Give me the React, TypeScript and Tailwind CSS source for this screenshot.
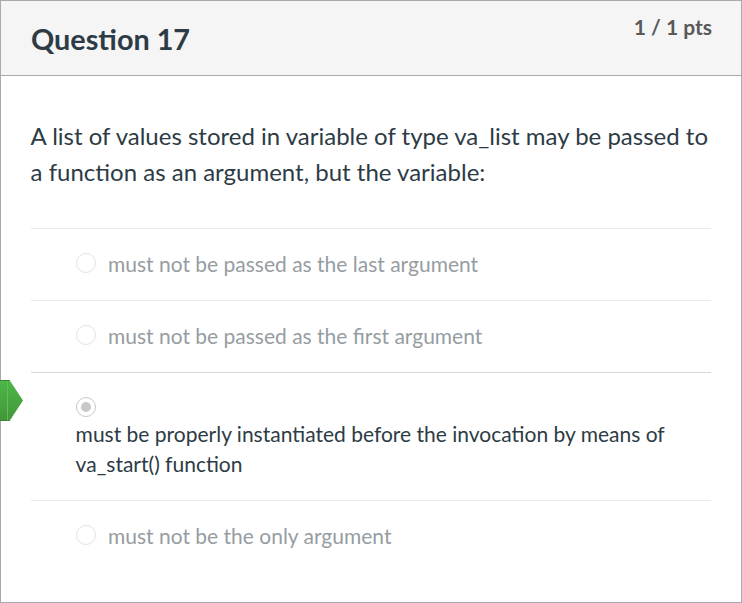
const options = [
  'must not be passed as the last argument',
  'must not be passed as the first argument',
];

function Radio({ checked = false }: { checked?: boolean }) {
  return (
    <span
      className={
        checked
          ? 'flex size-5 shrink-0 items-center justify-center rounded-full border border-[#c8c8c8] bg-white'
          : 'flex size-5 shrink-0 items-center justify-center rounded-full border border-[#e3e3e3] bg-white'
      }
    >
      {checked && <span className="size-2.5 rounded-full bg-[#c8c8c8]" />}
    </span>
  );
}

function MutedAnswer({ text }: { text: string }) {
  return (
    <div className="flex h-[72px] items-start border-t border-[#eaeaea] pt-6 pl-[45px]">
      <Radio />
      <span className="-mt-px ml-3 text-[21px] leading-6 text-[#969da2]">{text}</span>
    </div>
  );
}

export default function App() {
  return (
    <div className="relative h-[603px] w-[742px] overflow-hidden font-['Lato',sans-serif] text-[#2d3b45]">
      <div className="h-full border border-[#aaaaaa] bg-white">
        <header className="flex h-[75px] items-start justify-between border-b border-[#aaaaaa] bg-[#f5f5f5] pr-[29px] pl-[30px]">
          <h2 className="pt-5 text-[28.8px] leading-9 font-bold">Question 17</h2>
          <span className="pt-[11px] text-[21px] leading-[30px] font-bold text-[#595959]">1 / 1 pts</span>
        </header>
        <main className="px-[30px] pt-[42px]">
          <p className="-ml-[0.4px] h-[110px] text-[24px] leading-9 whitespace-nowrap">
            A list of values stored in variable of type va_list may be passed to
            <br />a function as an argument, but the variable:
          </p>
          {options.map((t) => (
            <MutedAnswer key={t} text={t} />
          ))}
          <div className="h-32 border-t border-[#d8d8d8] pt-6 pl-[45px]">
            <Radio checked />
            <p className="-ml-[0.4px] pt-[2px] text-[21px] leading-[30px] whitespace-nowrap">
              must be properly instantiated before the invocation by means of
              <br />
              va_start() function
            </p>
          </div>
          <MutedAnswer text="must not be the only argument" />
        </main>
      </div>
      <svg className="absolute top-[379px] left-0" width="25" height="43" viewBox="0 0 25 43">
        <defs>
          <linearGradient id="arrow" x1="0" y1="0" x2="0" y2="1">
            <stop offset="0" stopColor="#4cb848" />
            <stop offset="1" stopColor="#439539" />
          </linearGradient>
        </defs>
        <path d="M0 1H9.5L23 21.5L9.5 42H0Z" fill="url(#arrow)" />
        <path d="M0 1.5H9.5M0 41.5H9.5" stroke="#398235" />
        <path d="M7.5 2V41" stroke="#62bd59" />
      </svg>
    </div>
  );
}
